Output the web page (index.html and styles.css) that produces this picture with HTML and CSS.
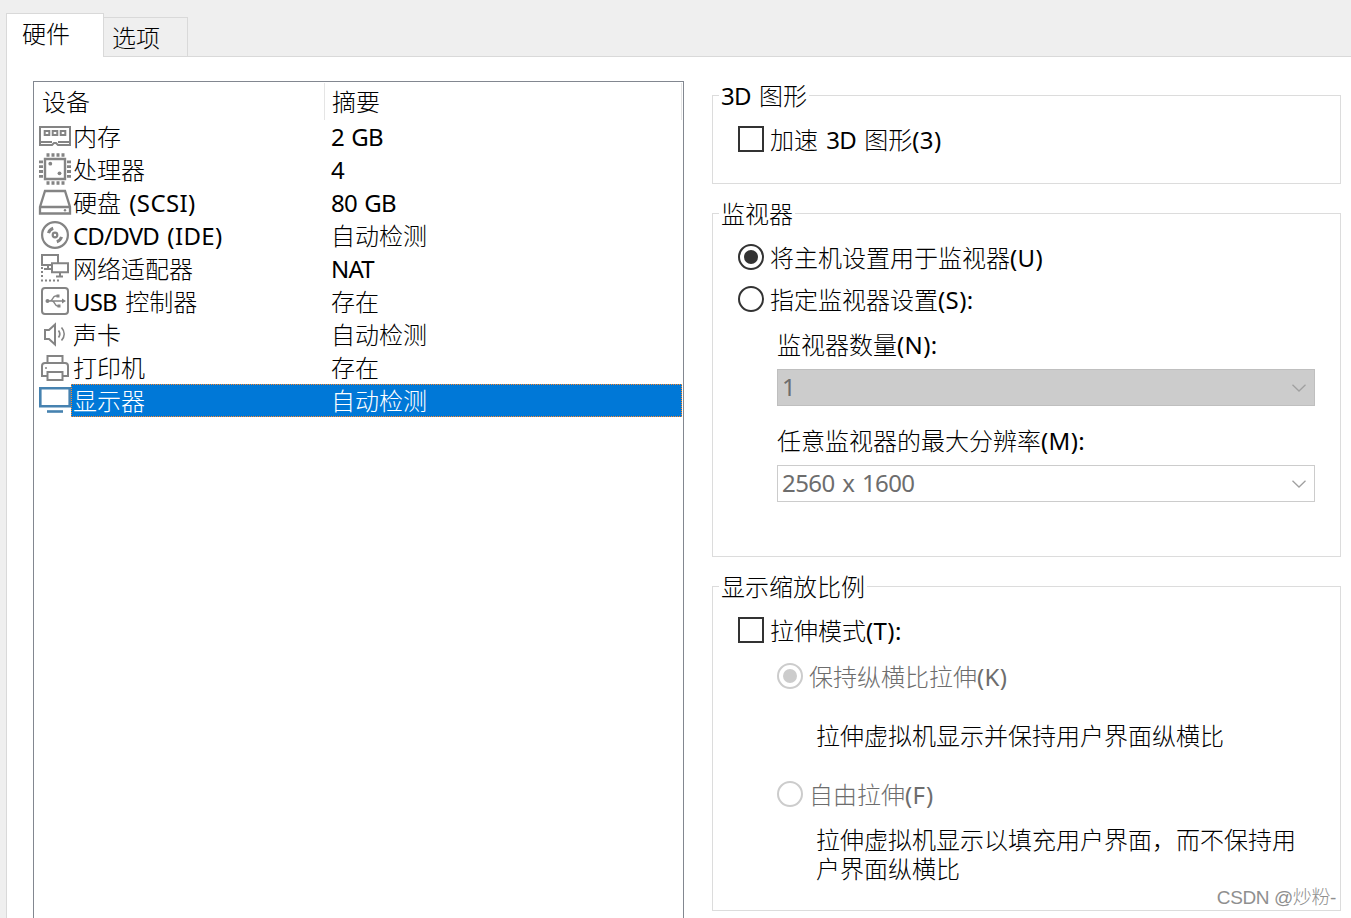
FILE: index.html
```html
<!DOCTYPE html>
<html lang="zh-CN">

<head>
    <meta charset="UTF-8">
    <meta name="viewport" content="width=device-width, initial-scale=1.0">
    <title>虚拟机设置</title>
    <link rel="stylesheet" href="styles.css">
</head>

<body>

    <nav class="tabs">
        <a class="tab active">硬件</a>
        <a class="tab">选项</a>
    </nav>

    <main class="page">

        <!-- 设备列表 -->
        <div class="device-list">
            <div class="list-head">
                <span class="head-name">设备</span>
                <span class="head-info">摘要</span>
            </div>
            <div class="device">
                <svg class="icon" width="34" height="33" viewBox="0 0 34 33" fill="none" stroke="#848484" stroke-width="2">
                    <path d="M2 7h30v18H20l-2-2h-2l-2 2H2zM2 22h12M20 22h12"/>
                    <path d="M6.700 11h4.600v4H6.700zM14.700 11h4.600v4h-4.600zM22.700 11h4.600v4h-4.600z"/>
                </svg>
                <div class="row">
                    <span class="name">内存</span>
                    <span class="info"><span class="en">2 GB</span></span>
                </div>
            </div>
            <div class="device">
                <svg class="icon" width="34" height="33" viewBox="0 0 34 33" fill="none" stroke="#848484" stroke-width="2">
                    <path d="M7 6h20v20H7z" stroke-width="2.400"/>
                    <path d="M8.500 2h18M8.500 30h18" stroke-width="3.600" stroke-dasharray="3 2"/>
                    <path d="M3 7.500v17.500M31 7.500v17.500" stroke-width="4" stroke-dasharray="2.800 2"/>
                    <circle cx="12.300" cy="10.700" r="1.900" fill="#848484" stroke="none"/>
                    <circle cx="21.500" cy="20.300" r="1.900" fill="#848484" stroke="none"/>
                </svg>
                <div class="row">
                    <span class="name">处理器</span>
                    <span class="info"><span class="en">4</span></span>
                </div>
            </div>
            <div class="device">
                <svg class="icon" width="34" height="33" viewBox="0 0 34 33" fill="none" stroke="#848484" stroke-width="2.300">
                    <path d="M7 5h20l5 16v6.500H2V21zM2 21h30"/>
                    <circle cx="27" cy="24.300" r="1.200" fill="#848484" stroke="none"/>
                </svg>
                <div class="row">
                    <span class="name">硬盘 <span class="en paren">(SCSI)</span></span>
                    <span class="info"><span class="en">80 GB</span></span>
                </div>
            </div>
            <div class="device">
                <svg class="icon" width="34" height="33" viewBox="0 0 34 33" fill="none" stroke="#848484" stroke-width="2.200">
                    <circle cx="17" cy="16" r="12.900"/>
                    <circle cx="17" cy="16" r="2.300"/>
                    <path d="M10.500 14.200a7 7 0 0 1 4.700-4.900M23.500 17.800a7 7 0 0 1-4.700 4.900" stroke-width="3"/>
                </svg>
                <div class="row">
                    <span class="name"><span class="en">CD/DVD</span> <span class="en paren">(IDE)</span></span>
                    <span class="info">自动检测</span>
                </div>
            </div>
            <div class="device">
                <svg class="icon" width="34" height="33" viewBox="0 0 34 33" fill="none" stroke="#848484" stroke-width="2">
                    <path d="M13 13H4V3h16v8M10 13v4M6 17h7"/>
                    <path d="M14 11.300h16v9H14zM22 20v4M18 24.500h7"/>
                    <path d="M4 15v12M3 28.500h18" stroke-dasharray="2 2"/>
                </svg>
                <div class="row">
                    <span class="name">网络适配器</span>
                    <span class="info"><span class="en">NAT</span></span>
                </div>
            </div>
            <div class="device">
                <svg class="icon" width="34" height="33" viewBox="0 0 34 33" fill="none" stroke="#848484" stroke-width="2">
                    <rect x="4" y="3" width="26" height="26" rx="3"/>
                    <g stroke-width="1.500">
                        <path d="M9 16h17M12 16c3 0 2.500-5 5.500-5h2M14 16c3 0 2.500 5 5.500 5h1"/>
                    </g>
                    <circle cx="9.500" cy="16" r="2" fill="#848484" stroke="none"/>
                    <path d="M24 13.500l4 2.500-4 2.500zM18.500 9.500h3v3h-3zM19.500 19.500h3v3h-3z" fill="#848484" stroke="none"/>
                </svg>
                <div class="row">
                    <span class="name"><span class="en">USB</span> 控制器</span>
                    <span class="info">存在</span>
                </div>
            </div>
            <div class="device">
                <svg class="icon" width="34" height="33" viewBox="0 0 34 33" fill="none" stroke="#848484" stroke-width="2">
                    <path d="M7 12h4l6-5.500v20L11 21H7z"/>
                    <path d="M20.500 12.500c1.500 2 1.500 5 0 7M23.500 9.500c3.500 4 3.500 9 0 13" stroke-width="1.700"/>
                </svg>
                <div class="row">
                    <span class="name">声卡</span>
                    <span class="info">自动检测</span>
                </div>
            </div>
            <div class="device">
                <svg class="icon" width="34" height="33" viewBox="0 0 34 33" fill="none" stroke="#848484" stroke-width="2">
                    <path d="M9.500 12V5h15v7M9 25H4V15q0-3 3-3h20q3 0 3 3v10h-5"/>
                    <path d="M9.500 21h15v8h-15z"/>
                    <path d="M7 17h2" stroke-width="1.500"/>
                </svg>
                <div class="row">
                    <span class="name">打印机</span>
                    <span class="info">存在</span>
                </div>
            </div>
            <div class="device selected">
                <svg class="icon" width="34" height="33" viewBox="0 0 34 33" fill="none" stroke="#4682b0" stroke-width="2.600">
                    <path d="M2.300 4.300h29.400v18H2.300z" fill="#fff"/>
                    <path d="M9 27.500h16"/>
                </svg>
                <div class="row">
                    <span class="name">显示器</span>
                    <span class="info">自动检测</span>
                </div>
            </div>
        </div>

        <!-- 显示器设置 -->
        <div class="settings">
            <fieldset class="group graphics">
                <legend><span class="en">3D</span> 图形</legend>
                <label class="option"><span class="checkbox"></span>加速 <span class="en">3D</span> 图形<span class="en paren">(3)</span></label>
            </fieldset>

            <fieldset class="group monitor">
                <legend>监视器</legend>
                <label class="option"><span class="radio checked"></span>将主机设置用于监视器<span class="en paren">(U)</span></label>
                <label class="option"><span class="radio"></span>指定监视器设置<span class="en paren">(S):</span></label>
                <div class="field">
                    <div class="field-label">监视器数量<span class="en paren">(N):</span></div>
                    <div class="select filled">
                        <span class="en">1</span>
                        <svg width="14" height="8" viewBox="0 0 14 8" fill="none" stroke="#a0a0a0" stroke-width="1.300"><path d="M.5.7L7 7l6.500-6.300"/></svg>
                    </div>
                </div>
                <div class="field">
                    <div class="field-label">任意监视器的最大分辨率<span class="en paren">(M):</span></div>
                    <div class="select">
                        <span class="en">2560 x 1600</span>
                        <svg width="14" height="8" viewBox="0 0 14 8" fill="none" stroke="#a0a0a0" stroke-width="1.300"><path d="M.5.7L7 7l6.500-6.300"/></svg>
                    </div>
                </div>
            </fieldset>

            <fieldset class="group scale">
                <legend>显示缩放比例</legend>
                <label class="option"><span class="checkbox"></span>拉伸模式<span class="en paren">(T):</span></label>
                <div class="sub-options">
                    <label class="option disabled"><span class="radio checked"></span>保持纵横比拉伸<span class="en paren">(K)</span></label>
                    <p class="hint">拉伸虚拟机显示并保持用户界面纵横比</p>
                    <label class="option disabled"><span class="radio"></span>自由拉伸<span class="en paren">(F)</span></label>
                    <p class="hint">拉伸虚拟机显示以填充用户界面，而不保持用户界面纵横比</p>
                </div>
            </fieldset>
        </div>

    </main>

    <div class="watermark">CSDN @炒粉-</div>

</body>

</html>
```

FILE: styles.css
```css
* {
    box-sizing: border-box;
}

body {
    position: relative;
    display: flex;
    flex-direction: column;
    height: 918px;
    margin: 0;
    overflow: hidden;
    background-color: #efefef;
    color: #000;
    font-family: 'Noto Sans', 'Noto Sans CJK SC', sans-serif;
    font-size: 24px;
    font-weight: 300;
    line-height: 33px;
    word-spacing: 2px;
}

.en {
    font-weight: 400;
    letter-spacing: -0.8px;
}

.en.paren {
    letter-spacing: 0.4px;
}

/* 标签页 */
.tabs {
    display: flex;
    align-items: flex-end;
    height: 57px;
    padding-left: 6px;
}

.tabs::after {
    content: "";
    flex: 1;
    border-bottom: 1px solid #d9d9d9;
}

.tab {
    width: 84px;
    height: 40px;
    padding: 3px 0 0 8px;
    border: 1px solid #d9d9d9;
    border-left: none;
}

.tab.active {
    width: 98px;
    height: 44px;
    padding: 3px 0 0 15px;
    border-left: 1px solid #d9d9d9;
    border-bottom: none;
    background-color: #fff;
}

.page {
    display: flex;
    flex: 1;
    gap: 28px;
    margin-left: 6px;
    padding: 24px 10px 0 26px;
    border-left: 1px solid #d9d9d9;
    background-color: #fff;
}

/* 设备列表 */
.device-list {
    width: 651px;
    border: 1px solid #828790;
    border-bottom: none;
}

.list-head {
    display: flex;
    height: 38px;
    padding: 1px 1px 0 0;
    line-height: 38px;
}

.head-name {
    width: 291px;
    padding-left: 8px;
    border-right: 1px solid #e5e5e5;
}

.head-info {
    flex: 1;
    padding-left: 7px;
    border-right: 1px solid #e5e5e5;
}

.device {
    display: flex;
    height: 33px;
    padding: 0 1px 0 4px;
}

.icon {
    flex: none;
    width: 34px;
    height: 33px;
    margin-right: -1px;
}

.row {
    display: flex;
    flex: 1;
    border: 1px solid transparent;
    line-height: 31px;
}

.name {
    width: 259px;
    padding-left: 1px;
}

.info {
    flex: 1;
}

.selected .row {
    background-color: #0078d7;
    border: 1px dotted #ff8728;
    color: #fff;
}

/* 右侧分组框 */
.settings {
    display: flex;
    flex-direction: column;
    gap: 18px;
    width: 629px;
    padding-top: 3px;
}

.group {
    margin: 0;
    padding: 0 25px;
    border: 1px solid #dcdcdc;
}

.group legend {
    margin-left: -19px;
    padding: 0 2px;
    line-height: 23px;
}

.graphics {
    height: 100px;
}

.monitor {
    height: 355px;
}

.scale {
    height: 336px;
}

.option {
    display: flex;
    align-items: center;
    height: 26px;
    margin-top: 19px;
    white-space: pre;
}

.option + .option {
    margin-top: 16px;
}

.checkbox,
.radio {
    width: 26px;
    height: 26px;
    margin-right: 6px;
    border: 2px solid #333;
}

.radio {
    padding: 4px;
    border-radius: 50%;
}

.radio.checked::before {
    content: "";
    display: block;
    width: 14px;
    height: 14px;
    border-radius: 50%;
    background-color: #333;
}

.disabled {
    color: #6d6d6d;
}

.disabled .radio {
    border-color: #ccc;
}

.disabled .radio.checked::before {
    background-color: #ccc;
}

.field {
    margin: 16px 0 0 39px;
}

.field + .field {
    margin-top: 18px;
}

.field-label {
    height: 41px;
}

.select {
    display: flex;
    align-items: center;
    justify-content: space-between;
    width: 538px;
    height: 37px;
    padding: 0 8px 0 4px;
    border: 1px solid #ccc;
    color: #6d6d6d;
}

.select .en {
    margin-top: -2px;
    letter-spacing: -0.6px;
}

.select.filled {
    background-color: #ccc;
    border-color: #bfbfbf;
}

.sub-options {
    margin: 20px 0 0 39px;
}

.sub-options .option {
    margin-top: 0;
}

.hint {
    width: 485px;
    margin: 32px 0 30px 39px;
    line-height: 30px;
}

.option + .hint:last-child {
    margin: 18px 0 0 39px;
    line-height: 29px;
}

.watermark {
    position: absolute;
    right: 15px;
    bottom: 5px;
    font-family: 'Liberation Sans', 'Noto Sans CJK SC', sans-serif;
    font-size: 19px;
    letter-spacing: -0.4px;
    line-height: 30px;
    word-spacing: 0;
    color: #8f8f8f;
}
```
